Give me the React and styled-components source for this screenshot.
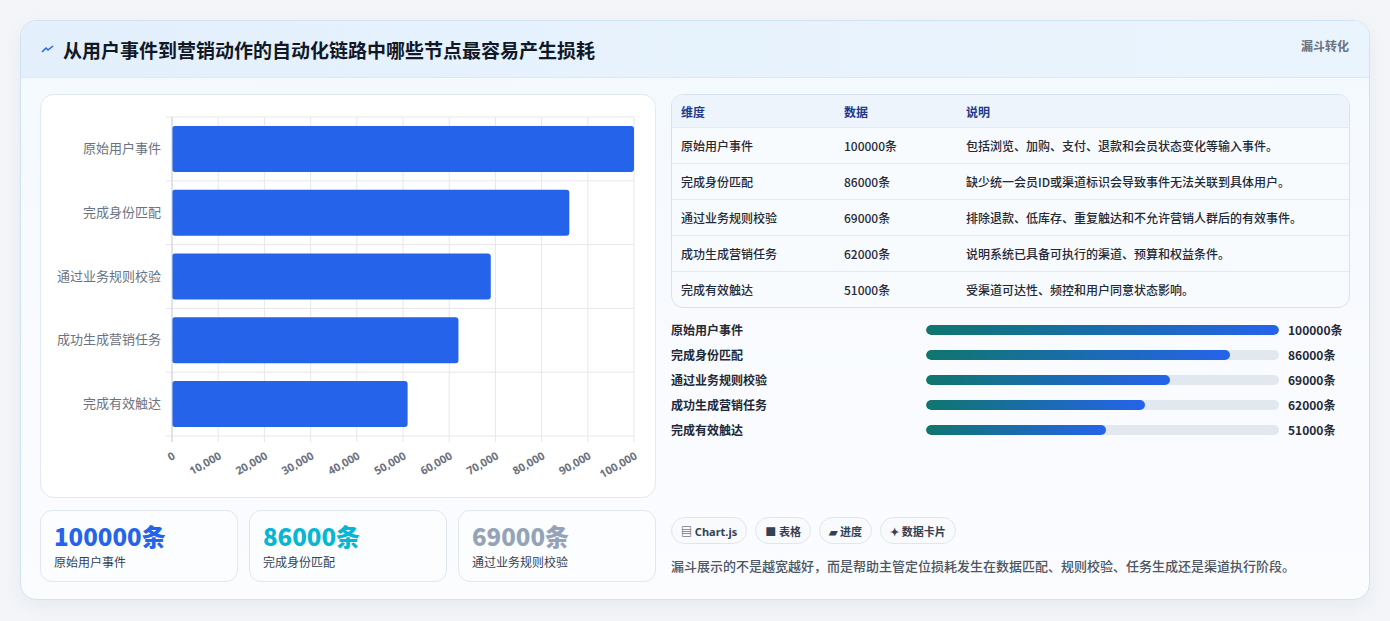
import React from "react";
import styled, { createGlobalStyle } from "styled-components";

const G = createGlobalStyle`
  body{margin:0;background:#f3f5f8;font-family:"Noto Sans CJK SC","Noto Sans",sans-serif;}
`;
const data = [
  ["原始用户事件", 100000, "包括浏览、加购、支付、退款和会员状态变化等输入事件。"],
  ["完成身份匹配", 86000, "缺少统一会员ID或渠道标识会导致事件无法关联到具体用户。"],
  ["通过业务规则校验", 69000, "排除退款、低库存、重复触达和不允许营销人群后的有效事件。"],
  ["成功生成营销任务", 62000, "说明系统已具备可执行的渠道、预算和权益条件。"],
  ["完成有效触达", 51000, "受渠道可达性、频控和用户同意状态影响。"],
];
const Page = styled.div`padding:20px 20px 22px 20px;`;
const Card = styled.div`border:1px solid #cfe3f3;border-radius:16px;background:linear-gradient(180deg,#f3f9fe,#f9fbfe 60%,#fbfcfe);overflow:hidden;box-shadow:0 6px 18px rgba(30,60,100,.06);`;
const Header = styled.div`height:56px;display:flex;align-items:center;justify-content:space-between;padding:0 20px;background:linear-gradient(90deg,#e3f0fc,#eaf4fd);border-bottom:1px solid #dbe9f5;`;
const Title = styled.h1`margin:0;font-size:19px;font-weight:700;color:#111827;display:flex;align-items:center;gap:8px;`;
const Tag = styled.span`font-size:12px;font-weight:700;color:#6b7280;align-self:flex-start;margin-top:16px;`;
const Body = styled.div`display:grid;grid-template-columns:616px 1fr;gap:15px;padding:16px 19px 17px 19px;`;
const Col = styled.div`display:flex;flex-direction:column;`;
const ChartBox = styled.div`height:402px;background:#fff;border:1px solid #e1e9f2;border-radius:14px;`;
const Kpis = styled.div`display:grid;grid-template-columns:repeat(3,198px);gap:11px;margin-top:12px;`;
const Kpi = styled.div`height:72px;box-sizing:border-box;border:1px solid #dfe8f2;border-radius:12px;background:#fbfdff;padding:10px 13px;`;
const KV = styled.div`font-size:24px;font-weight:800;line-height:30px;color:${p=>p.c};`;
const KL = styled.div`font-size:12px;color:#374151;margin-top:2px;`;
const Table = styled.div`border:1px solid #d6e2ee;border-radius:12px;overflow:hidden;background:#f8fbfd;`;
const Row = styled.div`display:grid;grid-template-columns:163px 122px 1fr;height:${p=>p.h}px;align-items:center;padding-left:9px;font-size:12px;color:${p=>p.head?"#1e3a8a":"#1f2937"};font-weight:${p=>p.head?700:500};background:${p=>p.head?"#edf4fc":"transparent"};border-top:${p=>p.first?"none":"1px solid #e3eaf2"};`;
const Bars = styled.div`display:flex;flex-direction:column;gap:9px;margin-top:13px;`;
const BarRow = styled.div`display:grid;grid-template-columns:255px 353px auto;gap:0;align-items:center;height:16px;font-size:12px;font-weight:700;color:#1f2937;`;
const Track = styled.div`height:10px;border-radius:5px;background:#e2e8f0;overflow:hidden;`;
const Fill = styled.div`height:100%;border-radius:5px;background:linear-gradient(90deg,#0f766e,#2563eb);`;
const Val = styled.span`padding-left:9px;`;
const Chips = styled.div`display:flex;gap:8px;margin-top:auto;`;
const Chip = styled.span`height:27px;box-sizing:border-box;padding:0 9px;border:1px solid #dfe6ee;border-radius:14px;background:#f8fafc;font-size:11px;font-weight:700;color:#334155;display:flex;align-items:center;gap:3px;font-family:"Noto Sans","Noto Sans CJK SC",sans-serif;`;
const Note = styled.p`margin:12px 0 7px;font-size:13px;color:#4b5563;font-weight:500;`;

function Chart(){
  const x0=131,w=462,y0=22,h=319,max=100000;
  const ticks=[0,10000,20000,30000,40000,50000,60000,70000,80000,90000,100000];
  return (
    <svg width="615" height="400">
      {ticks.map(t=>{const x=x0+w*t/max;return <g key={t}>
        <line x1={x} x2={x} y1={y0} y2={y0+h+6} stroke="#e5e7eb"/>
        <text x={x+4} y={y0+h+22} fontSize="11" fontWeight="700" fill="#6b7280" textAnchor="end" transform={`rotate(-30 ${x+4} ${y0+h+22})`} fontFamily="Noto Sans,sans-serif">{t.toLocaleString("en-US")}</text></g>})}
      {[0,1,2,3,4,5].map(i=><line key={i} x1={x0-6} x2={x0+w} y1={y0+i*h/5} y2={y0+i*h/5} stroke="#e5e7eb"/>)}
      {data.map((d,i)=>{const cy=y0+h/5*(i+.5);return <g key={i}>
        <rect x={x0} y={cy-23} width={w*d[1]/max} height={46} rx="3" fill="#2563eb"/>
        <text x={x0-11} y={cy+4} fontSize="13" fill="#6b7280" textAnchor="end">{d[0]}</text></g>})}
      <line x1={x0} x2={x0} y1={y0} y2={y0+h+6} stroke="#cbd5e1"/>
    </svg>);
}

export default function App(){
  return <Page><G/><Card>
    <Header><Title><svg width="14" height="10" viewBox="0 0 14 10"><path d="M1 8 L5 4 L7 6 L12 2" stroke="#2563eb" strokeWidth="1.5" fill="none"/></svg>从用户事件到营销动作的自动化链路中哪些节点最容易产生损耗</Title><Tag>漏斗转化</Tag></Header>
    <Body>
      <Col>
        <ChartBox><Chart/></ChartBox>
        <Kpis>
          <Kpi><KV c="#2563eb">100000条</KV><KL>原始用户事件</KL></Kpi>
          <Kpi><KV c="#06b6d4">86000条</KV><KL>完成身份匹配</KL></Kpi>
          <Kpi><KV c="#94a3b8">69000条</KV><KL>通过业务规则校验</KL></Kpi>
        </Kpis>
      </Col>
      <Col>
        <Table>
          <Row head first h={32}><span>维度</span><span>数据</span><span>说明</span></Row>
          {data.map(d=><Row key={d[0]} h={35}><span>{d[0]}</span><span>{d[1]}条</span><span>{d[2]}</span></Row>)}
        </Table>
        <Bars>{data.map(d=><BarRow key={d[0]}><span>{d[0]}</span><Track><Fill style={{width:`${d[1]/1000}%`}}/></Track><Val>{d[1]}条</Val></BarRow>)}</Bars>
        <Chips><Chip>▤ Chart.js</Chip><Chip>■ 表格</Chip><Chip>▰ 进度</Chip><Chip>✦ 数据卡片</Chip></Chips>
        <Note>漏斗展示的不是越宽越好，而是帮助主管定位损耗发生在数据匹配、规则校验、任务生成还是渠道执行阶段。</Note>
      </Col>
    </Body>
  </Card></Page>;
}
